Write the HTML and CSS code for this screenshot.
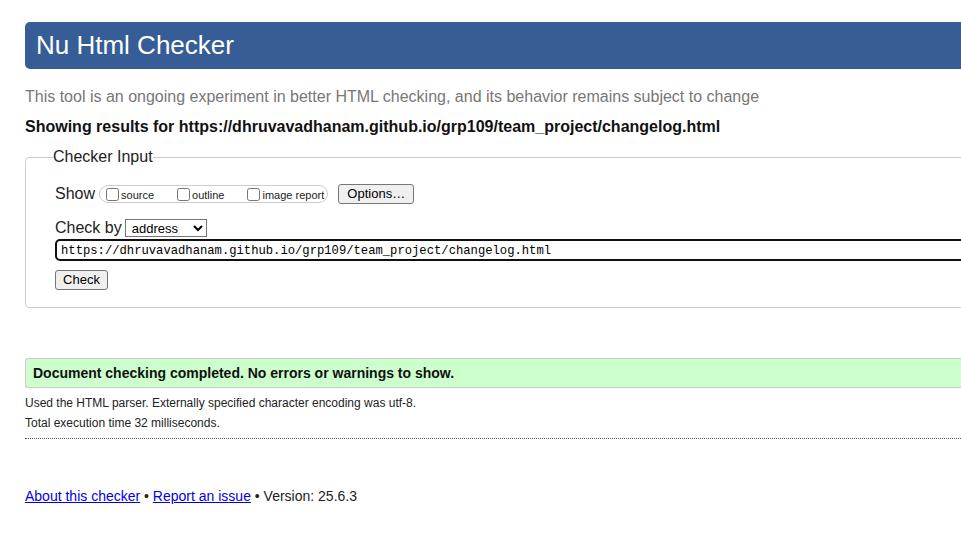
FILE: index.html
```html
<!DOCTYPE html>
<html lang="en">
<head>
<meta charset="utf-8">
<title>Showing results for https://dhruvavadhanam.github.io/grp109/team_project/changelog.html - Nu Html Checker</title>
<link rel="stylesheet" href="styles.css">
</head>
<body>
<div class="page">
  <h1 class="banner">Nu Html Checker</h1>
  <p class="tagline">This tool is an ongoing experiment in better HTML checking, and its behavior remains subject to change</p>
  <p class="showing">Showing results for https://dhruvavadhanam.github.io/grp109/team_project/changelog.html</p>

  <form class="checker-form">
    <fieldset class="input-set">
      <legend>Checker Input</legend>
      <div class="row show-row">
        <span class="row-label">Show</span>
        <span class="opts">
          <label class="opt"><input type="checkbox">source</label>
          <label class="opt"><input type="checkbox">outline</label>
          <label class="opt"><input type="checkbox">image report</label>
        </span>
        <button type="button" class="btn options-btn">Options…</button>
      </div>
      <div class="row checkby-row">
        <span class="row-label">Check by</span>
        <select class="method">
          <option>address</option>
          <option>file upload</option>
          <option>text input</option>
        </select>
      </div>
      <div class="row url-row">
        <input class="url" type="url" value="https://dhruvavadhanam.github.io/grp109/team_project/changelog.html">
      </div>
      <div class="row submit-row">
        <button type="button" class="btn check-btn">Check</button>
      </div>
    </fieldset>
  </form>

  <p class="success">Document checking completed. No errors or warnings to show.</p>
  <p class="details">Used the HTML parser. Externally specified character encoding was utf-8.</p>
  <p class="details">Total execution time 32 milliseconds.</p>
  <hr class="sep">

  <p class="footer"><a href="#">About this checker</a> • <a href="#">Report an issue</a> • Version: 25.6.3</p>
</div>
</body>
</html>
```
FILE: styles.css
```css
html {
  overflow: hidden;
}
body {
  margin: 0;
  background: #fff;
  color: #222;
  font-family: "Liberation Sans", Arial, sans-serif;
}
.page {
  width: 1100px;
  padding-left: 25px;
  padding-top: 22px;
}
.banner {
  margin: 0;
  height: 47px;
  box-sizing: border-box;
  padding-left: 11px;
  background: #365d95;
  color: #fff;
  border-radius: 5px 0 0 5px;
  font-weight: normal;
  font-size: 26px;
  line-height: 47px;
}
.tagline {
  margin: 19px 0 0;
  font-size: 16px;
  line-height: 18px;
  color: #777;
}
.showing {
  margin: 12px 0 0;
  font-size: 16px;
  line-height: 18px;
  font-weight: bold;
  color: #111;
}
.checker-form {
  margin: 12px 0 0;
}
.input-set {
  margin: 0;
  border: 1px solid #ccc;
  border-radius: 4px;
  padding: 0 0 17px 29px;
}
.input-set legend {
  padding: 0;
  margin-left: -2px;
  font-size: 16px;
  line-height: 18px;
  color: #222;
}
.row {
  display: flex;
  align-items: center;
}
.row-label {
  font-size: 16px;
  line-height: 18px;
  color: #222;
}
.show-row {
  margin-top: 18px;
  height: 20px;
}
.opts {
  display: inline-flex;
  align-items: center;
  margin-left: 4px;
  height: 18px;
  box-sizing: border-box;
  border: 1px solid #ccc;
  border-radius: 9px;
  padding: 0 3px 0 2px;
}
.opt {
  display: inline-flex;
  align-items: center;
  font-size: 11px;
  line-height: 13px;
  padding-top: 2px;
  color: #222;
  margin-right: 19px;
}
.opt:last-child {
  margin-right: 0;
}
.opt input {
  margin: -2px 2px 0 4px;
  width: 13px;
  height: 13px;
}
.btn {
  font-family: "Liberation Sans", Arial, sans-serif;
  font-size: 13px;
  color: #000;
  background: #efefef;
  border: 1px solid #767676;
  border-radius: 3px;
  height: 20px;
  padding: 0 6px;
  line-height: 16px;
}
.options-btn {
  margin-left: 10px;
  width: 76px;
}
.checkby-row {
  margin-top: 14px;
  height: 19px;
}
.method {
  margin-left: 3px;
  font-family: "Liberation Sans", Arial, sans-serif;
  font-size: 13px;
  height: 18px;
  width: 82px;
  border: 1px solid #767676;
  border-radius: 0;
  background: #fff;
  color: #000;
  padding: 0 2px;
}
.url-row {
  margin-top: 2px;
}
.url {
  width: 100%;
  height: 22px;
  box-sizing: border-box;
  border: 2px solid #101010;
  border-radius: 5px;
  padding: 2px 4px 0;
  font-family: "Liberation Mono", "DejaVu Sans Mono", monospace;
  font-size: 12.2px;
  color: #000;
  outline: none;
}
.submit-row {
  margin-top: 9px;
}
.check-btn {
  width: 53px;
  padding: 0;
}
.success {
  margin: 50px 0 0;
  height: 30px;
  box-sizing: border-box;
  background: #ccffcc;
  border: 1px solid #ccc;
  border-right: none;
  border-radius: 3px 0 0 3px;
  padding-left: 7px;
  font-size: 14px;
  font-weight: bold;
  line-height: 28px;
  color: #111;
}
.details {
  margin: 8px 0 0;
  font-size: 12px;
  line-height: 14px;
  color: #222;
}
.details + .details {
  margin-top: 6px;
}
.sep {
  margin: 8px 0 0;
  border: none;
  border-top: 1px dotted #555;
  height: 0;
}
.footer {
  margin: 49px 0 0;
  font-size: 14px;
  line-height: 16px;
  color: #222;
}
.footer a {
  color: #00e;
  text-decoration: underline;
}
```
